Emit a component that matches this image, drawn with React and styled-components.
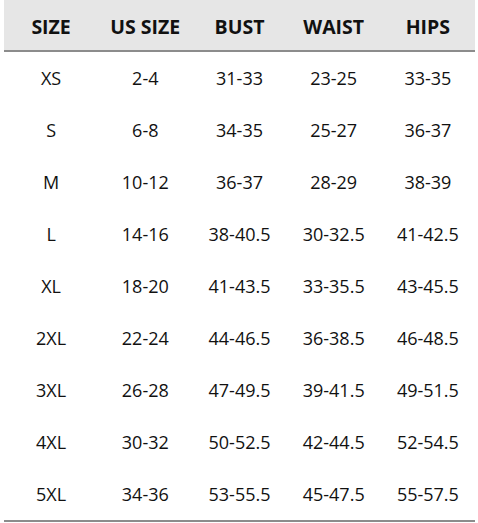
import React from 'react';
import styled, { createGlobalStyle } from 'styled-components';

const GlobalStyle = createGlobalStyle`
  body {
    margin: 0;
    background: #fff;
    font-family: 'Open Sans', 'Noto Sans', 'DejaVu Sans', sans-serif;
  }
`;

const rows = [
  ['XS', '2-4', '31-33', '23-25', '33-35'],
  ['S', '6-8', '34-35', '25-27', '36-37'],
  ['M', '10-12', '36-37', '28-29', '38-39'],
  ['L', '14-16', '38-40.5', '30-32.5', '41-42.5'],
  ['XL', '18-20', '41-43.5', '33-35.5', '43-45.5'],
  ['2XL', '22-24', '44-46.5', '36-38.5', '46-48.5'],
  ['3XL', '26-28', '47-49.5', '39-41.5', '49-51.5'],
  ['4XL', '30-32', '50-52.5', '42-44.5', '52-54.5'],
  ['5XL', '34-36', '53-55.5', '45-47.5', '55-57.5'],
];

const heads = ['SIZE', 'US SIZE', 'BUST', 'WAIST', 'HIPS'];

const Table = styled.div`
  width: 471px;
  margin-left: 4px;
  border-bottom: 2px solid #8c8c8c;
`;

const Row = styled.div`
  display: grid;
  grid-template-columns: repeat(5, 1fr);
  height: ${(props) => (props.head ? '50px' : '52px')};
  align-items: center;
  background: ${(props) => (props.head ? '#e6e6e6' : '#fff')};
  border-bottom: ${(props) => (props.head ? '2px solid #8c8c8c' : 'none')};
`;

const Cell = styled.div`
  text-align: center;
  font-size: ${(props) => (props.head ? '19.5px' : '18px')};
  font-weight: ${(props) => (props.head ? 700 : 400)};
  color: #111;
  padding-top: ${(props) => (props.head ? '3px' : '0')};
`;

function App() {
  return (
    <>
      <GlobalStyle />
      <Table>
        <Row head>
          {heads.map((h) => (
            <Cell head key={h}>{h}</Cell>
          ))}
        </Row>
        {rows.map((r) => (
          <Row key={r[0]}>
            {r.map((c, i) => (
              <Cell key={i}>{c}</Cell>
            ))}
          </Row>
        ))}
      </Table>
    </>
  );
}

export default App;
